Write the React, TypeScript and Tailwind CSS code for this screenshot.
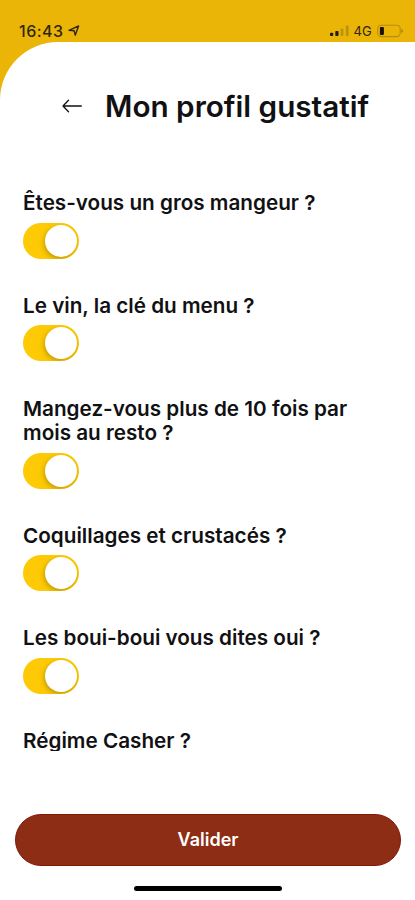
import { useState } from "react";

const QUESTIONS = [
  "Êtes-vous un gros mangeur ?",
  "Le vin, la clé du menu ?",
  "Mangez-vous plus de 10 fois par mois au resto ?",
  "Coquillages et crustacés ?",
  "Les boui-boui vous dites oui ?",
  "Régime Casher ?",
];

function StatusBar() {
  return (
    <div className="flex h-[42px] shrink-0 items-end justify-between pl-[19px] pr-[12px] pb-[3px] text-[#30270a]">
      <div className="flex h-4 items-center">
        <span className="text-[16px] leading-4 font-medium tracking-[0.5px]">16:43</span>
        <svg className="ml-[4px]" width="12" height="12" viewBox="0 0 12 12" fill="none" stroke="currentColor" strokeWidth="1.4" strokeLinejoin="round">
          <path d="M1 5.4 10.6 1 7.2 10.2 6.2 5.8Z" />
        </svg>
      </div>
      <div className="flex h-4 items-center">
        <svg width="20" height="12" viewBox="0 0 20 12">
          <rect x="0" y="7.8" width="3.2" height="3.2" rx=".8" fill="#241d05" />
          <rect x="5.3" y="6" width="3.2" height="5" rx=".8" fill="#241d05" />
          <rect x="10.6" y="3.5" width="2.8" height="7.5" rx=".8" fill="#b99310" />
          <rect x="15.8" y="0.5" width="2.8" height="10.5" rx=".8" fill="#b99310" />
        </svg>
        <span className="ml-[4px] text-[13px] leading-4 tracking-[0.2px]">4G</span>
        <svg className="ml-[5px]" width="26" height="14" viewBox="0 0 26 14">
          <rect x=".7" y="1.2" width="22.5" height="11.4" rx="3.6" fill="none" stroke="#b48f0d" strokeWidth="1.1" />
          <rect x="2.9" y="3.1" width="4" height="7.8" rx="1" fill="#171202" />
          <path d="M24.5 5v4q1.3-.6 1.3-2t-1.3-2" fill="#967711" />
        </svg>
      </div>
    </div>
  );
}

function Toggle({ label }: { label: string }) {
  const [on, setOn] = useState(true);
  return (
    <button
      role="switch"
      aria-checked={on}
      aria-label={label}
      onClick={() => setOn(!on)}
      className={`mt-[7.1px] flex h-9 w-14 overflow-hidden rounded-full p-[2px] ${on ? "justify-end bg-[#fdca05]" : "justify-start bg-gray-200"}`}
    >
      <span className="size-8 rounded-full bg-white shadow-[-1px_2px_5px_rgba(110,80,0,0.4)]" />
    </button>
  );
}

export default function App() {
  return (
    <div className="flex h-[900px] w-full flex-col overflow-hidden bg-[#ebb508] font-['Inter',sans-serif] text-[#111113]">
      <StatusBar />
      <main className="flex min-h-0 flex-1 flex-col rounded-tl-[58px] bg-white">
        <header className="flex h-[128px] shrink-0 items-center pl-[62px]">
          <svg width="20" height="14" viewBox="0 0 20 14" fill="none" stroke="#111" strokeWidth="1.3" strokeLinecap="round" strokeLinejoin="round">
            <path d="M1 7h18.3M6.5 1.3 1 7l5.5 5.7" />
          </svg>
          <h1 className="ml-[23px] text-[29.7px] leading-9 font-semibold whitespace-nowrap">Mon profil gustatif</h1>
        </header>
        <section className="flex h-[581px] shrink-0 flex-col gap-[35.1px] overflow-hidden pt-[21.2px] pl-[23px]">
          {QUESTIONS.map((text) => (
            <div key={text} className="w-[345px] shrink-0">
              <h2 className="text-[20.7px] leading-[24.5px] font-semibold">{text}</h2>
              <Toggle label={text} />
            </div>
          ))}
        </section>
        <footer className="flex flex-1 flex-col items-center pt-[63px]">
          <button className="mr-[14px] ml-[15px] h-[52px] self-stretch rounded-full border border-[#861705] bg-[#8d2d15] pb-[2px] text-[18px] font-semibold text-white">
            Valider
          </button>
          <div className="mt-5 h-[5px] w-[148px] rounded-full bg-black" />
        </footer>
      </main>
    </div>
  );
}
